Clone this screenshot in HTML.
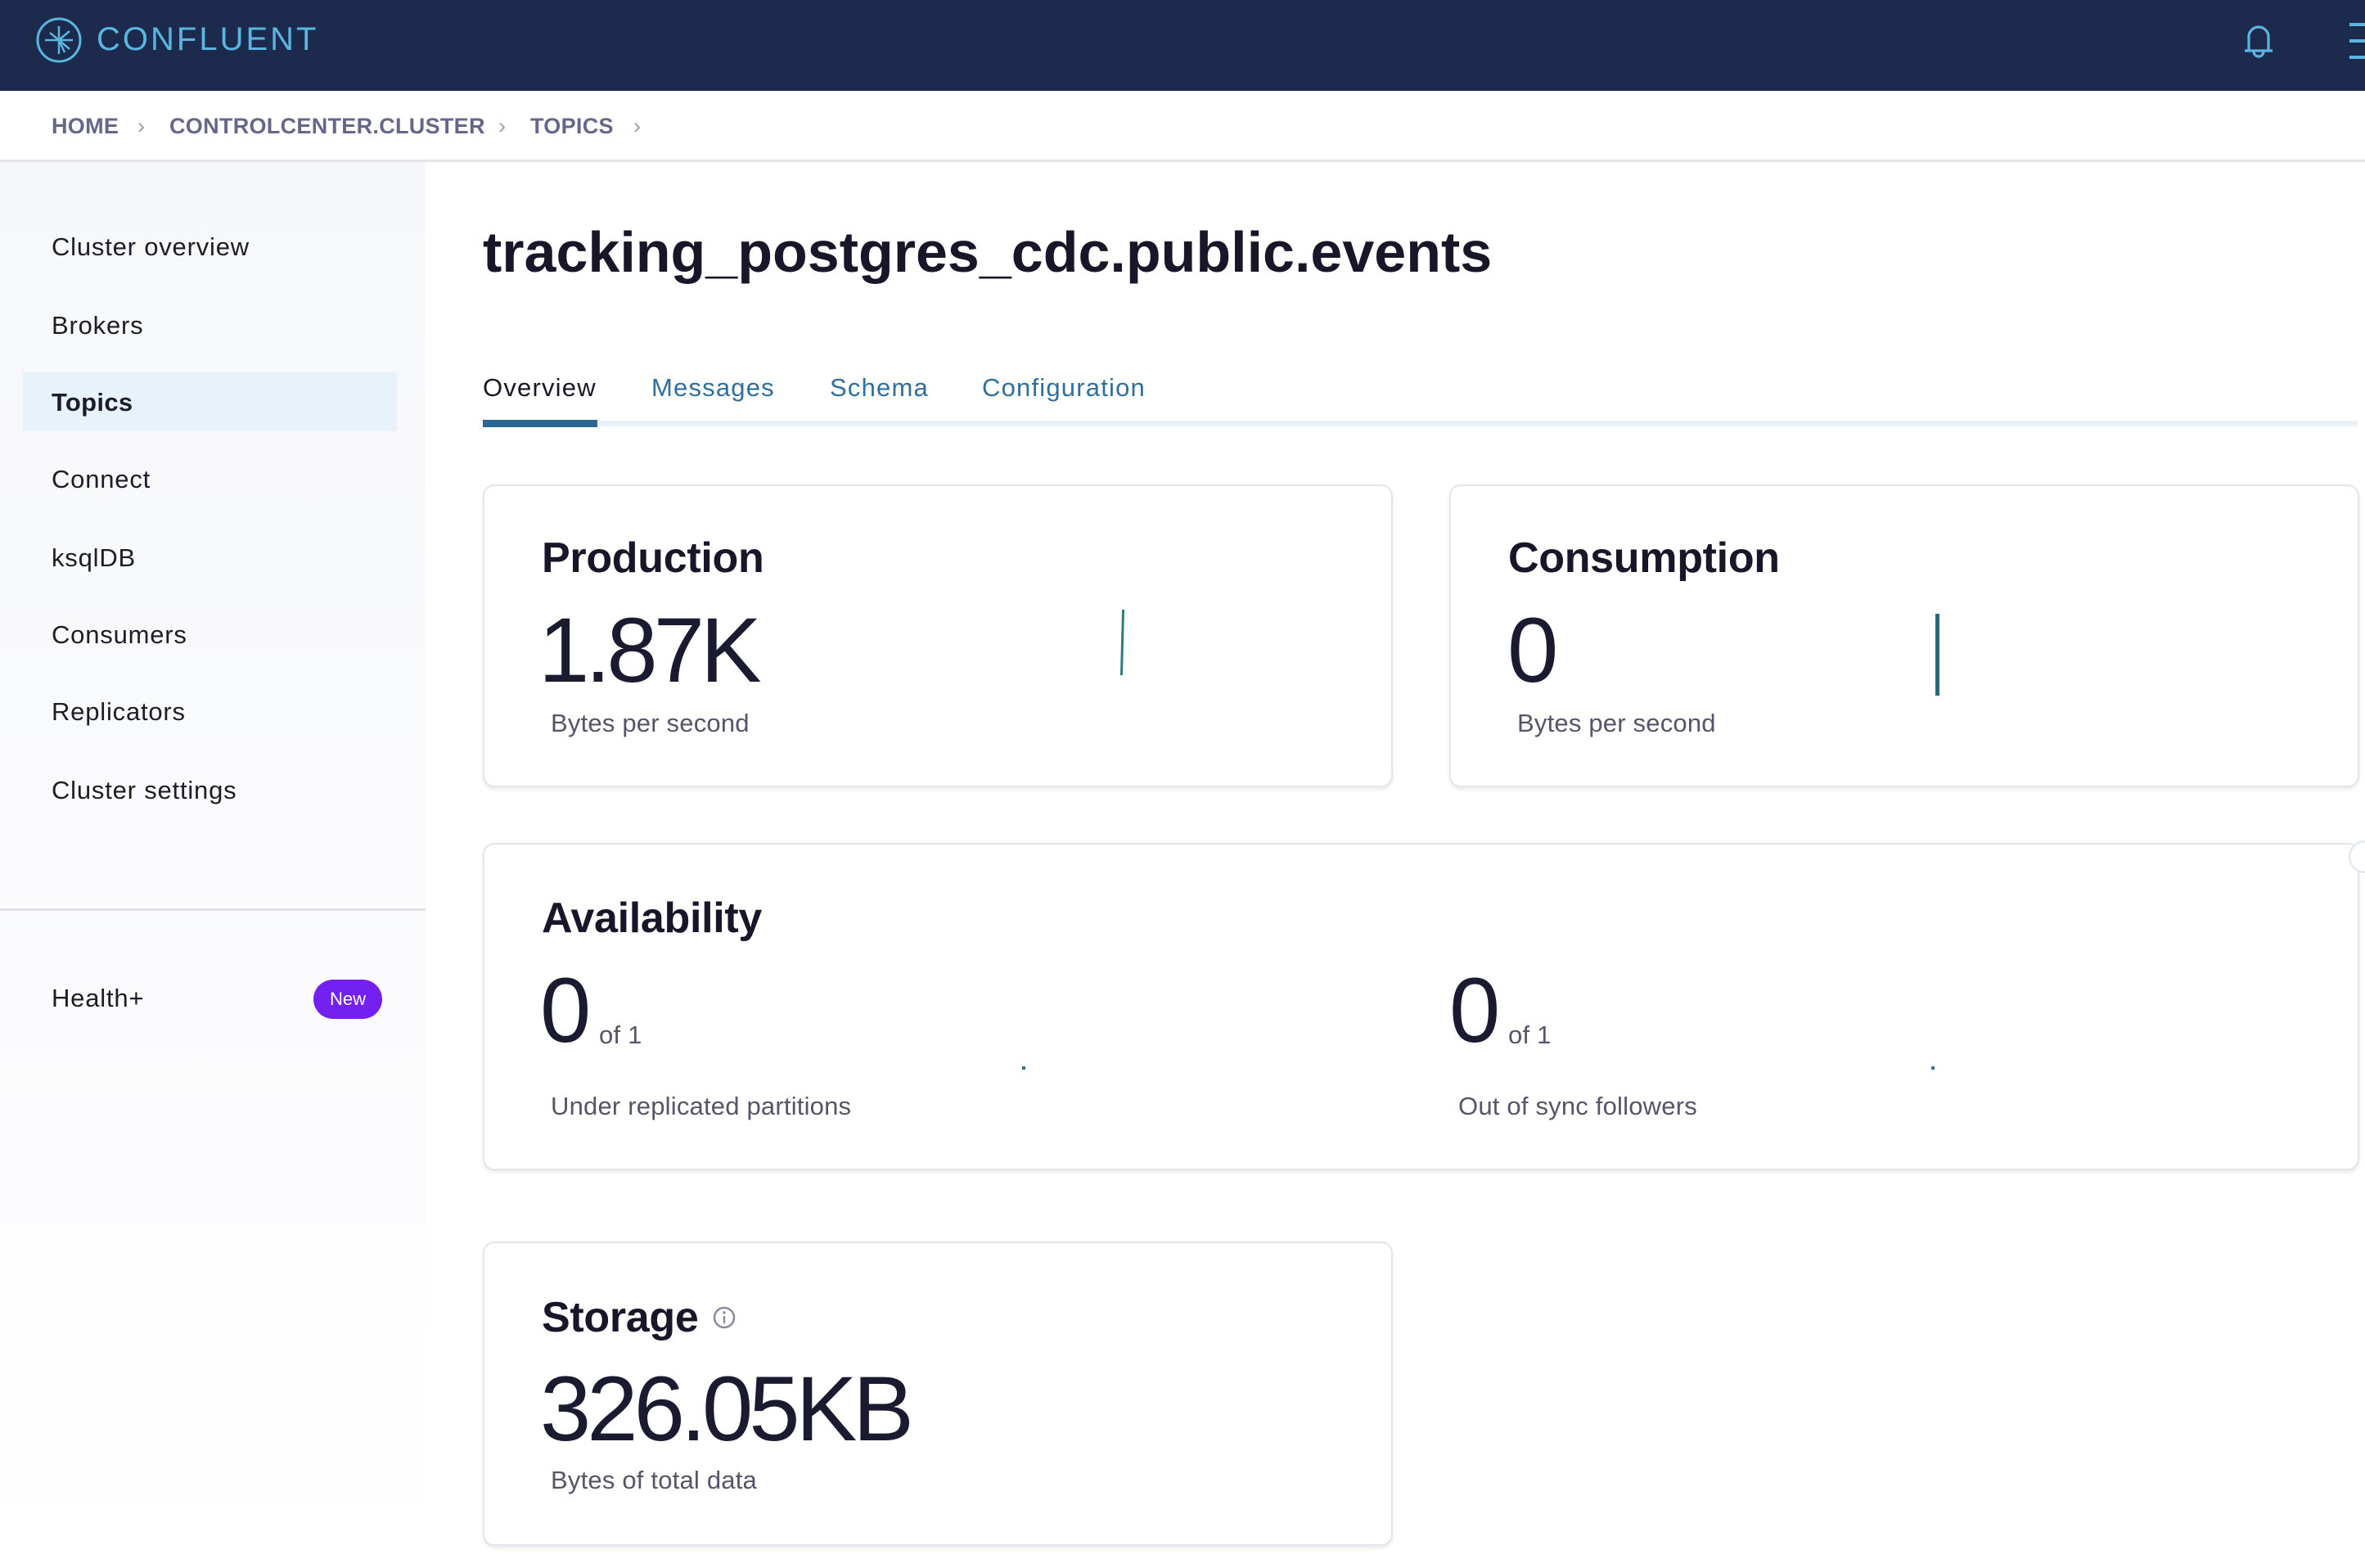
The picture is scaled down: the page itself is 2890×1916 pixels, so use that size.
<!DOCTYPE html>
<html><head><meta charset="utf-8"><style>
*{margin:0;padding:0;box-sizing:border-box}
html,body{width:2890px;height:1916px;overflow:hidden;background:#fff;font-family:"Liberation Sans",sans-serif;color:#171729}
.abs{position:absolute;white-space:nowrap}
.hdr{position:absolute;left:0;top:0;width:2890px;height:111px;background:#1c2b4d}
.bc{position:absolute;left:0;top:111px;width:2890px;height:87px;border-bottom:3px solid #e2e2e8}
.bct{font-size:27px;color:#66668a;letter-spacing:0.3px;font-weight:bold;top:139px}
.side{position:absolute;left:0;top:198px;width:520px;height:1718px;background:linear-gradient(180deg,#f6f7fa,#fbfbfd 60%,#fff)}
.si{font-size:31px;left:63px;color:#1c1c2b;letter-spacing:0.8px}
.card{position:absolute;background:#fff;border:2px solid #e4e4ea;border-radius:14px;box-shadow:0 3px 4px rgba(0,0,0,0.08)}
.ct{font-size:52px;font-weight:bold;color:#171729;letter-spacing:-0.3px}
.big{font-size:112px;font-weight:300;color:#1a1a30;letter-spacing:-5px}
.lab{font-size:31px;color:#55556a;letter-spacing:0.2px}
.tab{font-size:31px;top:456px;color:#2e6f9e;letter-spacing:1.2px}
</style></head><body>
<div class="hdr"></div>
<svg class="abs" style="left:43px;top:20px" width="58" height="58" viewBox="0 0 58 58"><circle cx="29" cy="29" r="26" fill="none" stroke="#5bb5de" stroke-width="3"/><g stroke="#5bb5de" stroke-width="2.5"><line x1="12" y1="29" x2="46" y2="29"/><line x1="29" y1="12" x2="29" y2="46"/><line x1="29" y1="29" x2="42" y2="18"/><line x1="29" y1="29" x2="42" y2="40"/><line x1="29" y1="29" x2="36" y2="44"/><line x1="29" y1="29" x2="18" y2="20"/></g></svg>
<div class="abs" style="left:118px;top:26px;font-size:40px;color:#5bb5de;letter-spacing:3px">CONFLUENT</div>
<svg class="abs" style="left:2740px;top:28px" width="40" height="46" viewBox="0 0 40 46"><path d="M8 33 V17 a12 12 0 0 1 24 0 V33 M3 34 H37 M14 35 a6 6 0 0 0 12 0" fill="none" stroke="#5bb5de" stroke-width="3.2" stroke-linejoin="round"/></svg>
<div class="abs" style="left:2871px;top:28px;width:20px;height:4px;background:#5bb5de"></div>
<div class="abs" style="left:2871px;top:48px;width:20px;height:4px;background:#5bb5de"></div>
<div class="abs" style="left:2871px;top:68px;width:20px;height:4px;background:#5bb5de"></div>
<div class="bc"></div>
<div class="abs bct" style="left:63px">HOME</div>
<div class="abs bct" style="left:168px;color:#9a9ab0;font-weight:normal">›</div>
<div class="abs bct" style="left:207px">CONTROLCENTER.CLUSTER</div>
<div class="abs bct" style="left:609px;color:#9a9ab0;font-weight:normal">›</div>
<div class="abs bct" style="left:648px">TOPICS</div>
<div class="abs bct" style="left:774px;color:#9a9ab0;font-weight:normal">›</div>
<div class="side"></div>
<div class="abs" style="left:28px;top:455px;width:457px;height:72px;background:#e7f2fa"></div>
<div class="abs si" style="top:284px">Cluster overview</div>
<div class="abs si" style="top:380px">Brokers</div>
<div class="abs si" style="top:474px;font-weight:bold;letter-spacing:0.3px">Topics</div>
<div class="abs si" style="top:568px">Connect</div>
<div class="abs si" style="top:664px">ksqlDB</div>
<div class="abs si" style="top:758px">Consumers</div>
<div class="abs si" style="top:852px">Replicators</div>
<div class="abs si" style="top:948px">Cluster settings</div>
<div class="abs" style="left:0;top:1110px;width:520px;height:3px;background:#e2e2e6"></div>
<div class="abs si" style="top:1202px">Health+</div>
<div class="abs" style="left:383px;top:1197px;width:84px;height:48px;border-radius:24px;background:#7420f0;color:#fff;font-size:22px;text-align:center;line-height:48px">New</div>
<div class="abs" style="left:590px;top:268px;font-size:70px;font-weight:bold;color:#171729;letter-spacing:0px">tracking_postgres_cdc.public.events</div>
<div class="abs tab" style="left:590px;color:#171729">Overview</div>
<div class="abs tab" style="left:796px">Messages</div>
<div class="abs tab" style="left:1014px">Schema</div>
<div class="abs tab" style="left:1200px">Configuration</div>
<div class="abs" style="left:590px;top:514px;width:2291px;height:7px;background:#eaf1f7"></div>
<div class="abs" style="left:590px;top:513px;width:140px;height:9px;background:#2b6690"></div>
<div class="card" style="left:590px;top:592px;width:1112px;height:370px"></div>
<div class="abs ct" style="left:662px;top:652px">Production</div>
<div class="abs big" style="left:658px;top:730px">1.87K</div>
<div class="abs lab" style="left:673px;top:866px">Bytes per second</div>
<div class="abs" style="left:1370px;top:745px;width:3px;height:80px;background:#2f7a80;transform:rotate(1.5deg)"></div>
<div class="card" style="left:1771px;top:592px;width:1112px;height:370px"></div>
<div class="abs ct" style="left:1843px;top:652px">Consumption</div>
<div class="abs big" style="left:1842px;top:730px">0</div>
<div class="abs lab" style="left:1854px;top:866px">Bytes per second</div>
<div class="abs" style="left:2365px;top:750px;width:5px;height:100px;background:#2a6a78"></div>
<div class="card" style="left:590px;top:1030px;width:2293px;height:400px"></div>
<div class="abs ct" style="left:662px;top:1092px">Availability</div>
<div class="abs big" style="left:660px;top:1170px">0</div>
<div class="abs lab" style="left:732px;top:1247px">of 1</div>
<div class="abs lab" style="left:673px;top:1334px">Under replicated partitions</div>
<div class="abs big" style="left:1771px;top:1170px">0</div>
<div class="abs lab" style="left:1843px;top:1247px">of 1</div>
<div class="abs lab" style="left:1782px;top:1334px">Out of sync followers</div>
<div class="abs" style="left:1249px;top:1303px;width:4px;height:4px;background:#2f7a80"></div>
<div class="abs" style="left:2360px;top:1303px;width:4px;height:4px;background:#2f7a80"></div>
<div class="abs" style="left:2870px;top:1027px;width:40px;height:40px;border-radius:50%;background:#fff;border:2px solid #dde6ee"></div>
<div class="card" style="left:590px;top:1517px;width:1112px;height:372px"></div>
<div class="abs ct" style="left:662px;top:1580px">Storage</div>
<svg class="abs" style="left:870px;top:1595px" width="30" height="30" viewBox="0 0 30 30"><circle cx="15" cy="15" r="12" fill="none" stroke="#8a8aa0" stroke-width="2.5"/><line x1="15" y1="13" x2="15" y2="22" stroke="#8a8aa0" stroke-width="2.5"/><circle cx="15" cy="9" r="1.7" fill="#8a8aa0"/></svg>
<div class="abs big" style="left:660px;top:1657px">326.05KB</div>
<div class="abs lab" style="left:673px;top:1791px">Bytes of total data</div>
</body></html>
